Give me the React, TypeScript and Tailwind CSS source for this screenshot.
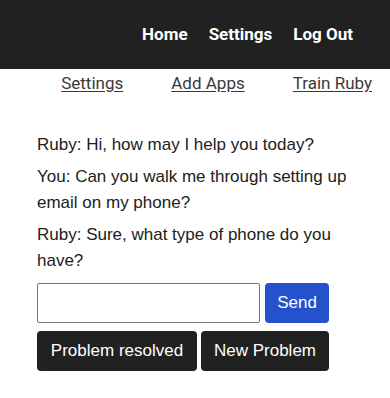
export default function App() {
  return (
    <div className="min-h-[398px] w-[390px] bg-white font-['Liberation_Sans',Arial,sans-serif] text-[#212121]">
      {/* Barre du haut */}
      <header className="flex h-[69px] items-center justify-end gap-[21px] bg-[#212121] pr-[37px] font-['Roboto',sans-serif] text-[17px] font-bold text-white">
        <a href="#">Home</a>
        <a href="#">Settings</a>
        <a href="#">Log Out</a>
      </header>

      {/* Liens secondaires */}
      <nav className="flex justify-end gap-[48px] pr-[18px] pt-[4px] font-['Roboto',sans-serif] text-[17px] leading-[20px] text-[#3a3a3a]">
        <a href="#" className="underline underline-offset-2">Settings</a>
        <a href="#" className="underline underline-offset-2">Add Apps</a>
        <a href="#" className="underline underline-offset-2">Train Ruby</a>
      </nav>

      {/* Conversation */}
      <main className="flex flex-col px-[37px] pt-[39px] text-[17px] leading-[26px]">
        <div className="flex flex-col gap-[6px]">
          <p>Ruby: Hi, how may I help you today?</p>
          <p>You: Can you walk me through setting up email on my phone?</p>
          <p>Ruby: Sure, what type of phone do you have?</p>
        </div>

        <div className="mt-[9px] flex gap-[5px]">
          <input
            type="text"
            className="h-10 w-[223px] rounded-[2px] border border-[#767676] bg-white px-2 outline-none"
          />
          <button className="h-10 w-[64px] rounded-[4px] bg-[#2452cc] text-white">
            Send
          </button>
        </div>

        <div className="mt-2 flex gap-1">
          <button className="h-10 w-[160px] rounded-[4px] bg-[#212121] text-white">
            Problem resolved
          </button>
          <button className="h-10 w-[128px] rounded-[4px] bg-[#212121] text-white">
            New Problem
          </button>
        </div>
      </main>
    </div>
  );
}
